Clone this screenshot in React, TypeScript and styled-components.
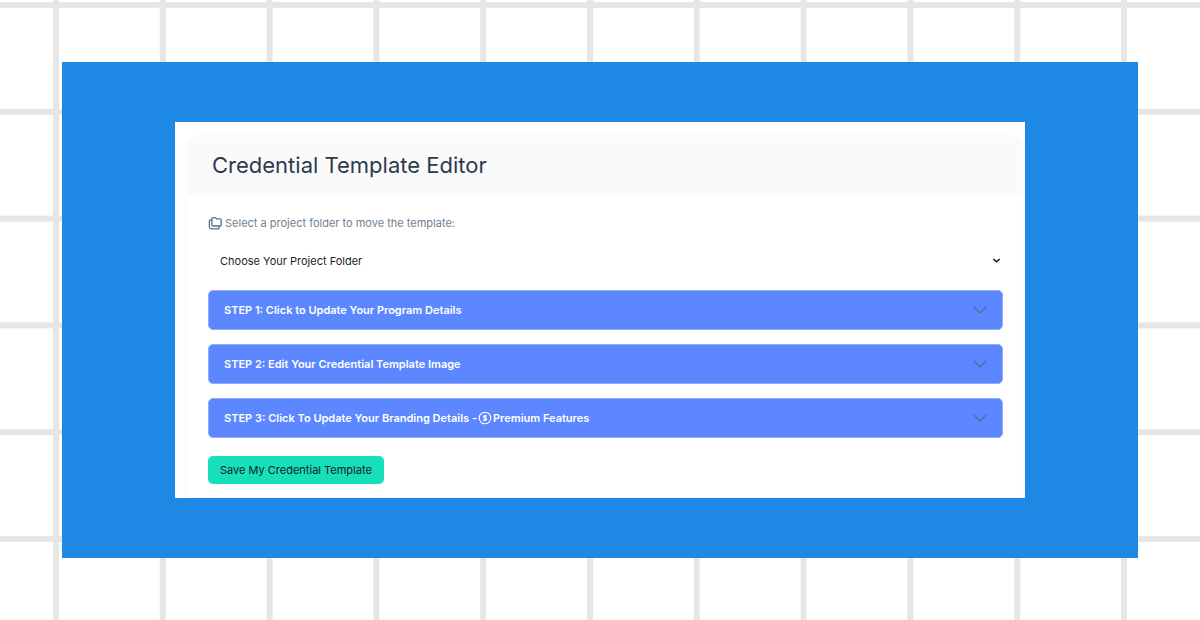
import React from "react";
import styled, { createGlobalStyle } from "styled-components";

const GlobalStyle = createGlobalStyle`
  *, *::before, *::after { box-sizing: border-box; }
  body {
    margin: 0;
    background: #ffffff;
    font-family: Inter, "Open Sans", sans-serif;
    font-size: 11px;
    line-height: 16px;
  }
  button, select { font: inherit; }
`;

const Page = styled.div`
  position: relative;
  min-height: 100vh;
  padding: 62px;
`;

const GridBackdrop = styled.svg`
  position: absolute;
  inset: 0;
  width: 100%;
  height: 100%;
`;

const Frame = styled.main`
  position: relative;
  padding: 60px 113px;
  background: #1e88e5;
`;

const Panel = styled.div`
  padding: 16px 2px 0 13px;
  background: #ffffff;
  overflow: hidden;
`;

const Card = styled.section`
  border-radius: 8px 8px 0 0;
  background: #ffffff;
  border-bottom: 1px solid #edf4fd;
  box-shadow: 0 0 10px rgba(0, 0, 0, 0.04);
`;

const CardHeader = styled.header`
  padding: 11px 24px 14px;
  border-radius: 8px 8px 0 0;
  background: #fafafa;
`;

const Title = styled.h1`
  margin: 0;
  color: #2c3a4f;
  font-size: 22px;
  font-weight: 400;
  line-height: 32px;
`;

const CardBody = styled.form`
  padding: 20px 20px 13px;
`;

const FolderLabel = styled.label`
  display: flex;
  align-items: center;
  gap: 3px;
  color: #6f7f93;
`;

const SelectWrap = styled.div`
  display: grid;
  align-items: center;
  margin: 16px 0;
`;

const FolderSelect = styled.select`
  grid-area: 1 / 1;
  width: 100%;
  height: 27px;
  padding: 0 30px 0 12px;
  border: 0;
  background: transparent;
  color: #1c1f24;
  appearance: none;
`;

const SelectArrow = styled.svg`
  grid-area: 1 / 1;
  justify-self: end;
  margin-right: 2px;
  pointer-events: none;
`;

const Steps = styled.div`
  display: grid;
  gap: 14px;
`;

const StepButton = styled.button`
  display: flex;
  align-items: center;
  justify-content: space-between;
  width: 100%;
  min-height: 40px;
  padding: 0 15px;
  border: 1px solid #8fabff;
  border-radius: 5px;
  background: #5c87ff;
  color: #ffffff;
  font-weight: 600;
  text-align: left;
`;

const StepText = styled.span`
  display: flex;
  align-items: center;
  gap: 1px;
`;

const SaveButton = styled.button`
  height: 28px;
  margin-top: 18px;
  padding: 0 12px;
  border: 0;
  border-radius: 5px;
  background: #16dfba;
  color: #10231f;
`;

const FoldersIcon = () => (
  <svg width="14" height="14" viewBox="0 0 14 14" fill="none" stroke="#5a6c86" strokeWidth="1.3" strokeLinejoin="round" strokeLinecap="round" aria-hidden="true">
    <path d="M3.9 2.8c0-.7.5-1.200 1.200-1.200h2c.4 0 .7.2.9.5l.6.8h3.400c.7 0 1.200.5 1.200 1.200v4.700c0 .7-.5 1.200-1.200 1.200H5.100c-.7 0-1.200-.5-1.200-1.200z" />
    <path d="M3.500 3.900H2.600c-.7 0-1.200.5-1.200 1.200v5.900c0 1.100.7 1.800 1.800 1.800h6.700c.7 0 1.200-.5 1.200-1.200v-.9" />
  </svg>
);

const DollarIcon = () => (
  <svg width="14" height="14" viewBox="0 0 14 14" fill="none" stroke="#ffffff" aria-hidden="true">
    <circle cx="7" cy="7" r="5.8" strokeWidth="1.1" />
    <path d="M8.6 5.600C8.400 4.900 7.800 4.600 7 4.600c-.9 0-1.600.4-1.600 1.100S6 6.700 7 6.900s1.700.5 1.700 1.200S8 9.400 7 9.400c-.9 0-1.600-.4-1.700-1.100M7 3.700v6.600" strokeWidth="1.1" />
  </svg>
);

const StepChevron = () => (
  <svg width="14" height="14" viewBox="0 0 14 14" fill="none" stroke="#56679a" strokeWidth="1.1" strokeLinecap="round" strokeLinejoin="round" aria-hidden="true">
    <path d="M1 4l6 6 6-6" />
  </svg>
);

const GRID_STEP = 106.8;

const Backdrop = () => (
  <GridBackdrop aria-hidden="true">
    <defs>
      <pattern id="grid" x="53" y="2" width={GRID_STEP} height={GRID_STEP} patternUnits="userSpaceOnUse">
        <path d="M0 0H107V6H6V107H0z" fill="#e6e6e6" />
      </pattern>
    </defs>
    <rect width="100%" height="100%" fill="url(#grid)" />
  </GridBackdrop>
);

type StepProps = { children: React.ReactNode };

const Step = ({ children }: StepProps) => (
  <StepButton type="button" aria-expanded={false}>
    <StepText>{children}</StepText>
    <StepChevron />
  </StepButton>
);

export default function App() {
  return (
    <Page>
      <GlobalStyle />
      <Backdrop />
      <Frame>
        <Panel>
          <Card>
            <CardHeader>
              <Title>Credential Template Editor</Title>
            </CardHeader>
            <CardBody>
              <FolderLabel htmlFor="folder">
                <FoldersIcon />
                Select a project folder to move the template:
              </FolderLabel>
              <SelectWrap>
                <FolderSelect id="folder">
                  <option>Choose Your Project Folder</option>
                </FolderSelect>
                <SelectArrow width="9" height="9" viewBox="0 0 9 9" fill="none" stroke="#15181d" strokeWidth="1.5" aria-hidden="true">
                  <path d="M1.300 3l3.200 2.800L7.700 3" />
                </SelectArrow>
              </SelectWrap>
              <Steps>
                <Step>STEP 1: Click to Update Your Program Details</Step>
                <Step>STEP 2: Edit Your Credential Template Image</Step>
                <Step>
                  STEP 3: Click To Update Your Branding Details -
                  <DollarIcon />
                  Premium Features
                </Step>
              </Steps>
              <SaveButton type="button">Save My Credential Template</SaveButton>
            </CardBody>
          </Card>
        </Panel>
      </Frame>
    </Page>
  );
}
